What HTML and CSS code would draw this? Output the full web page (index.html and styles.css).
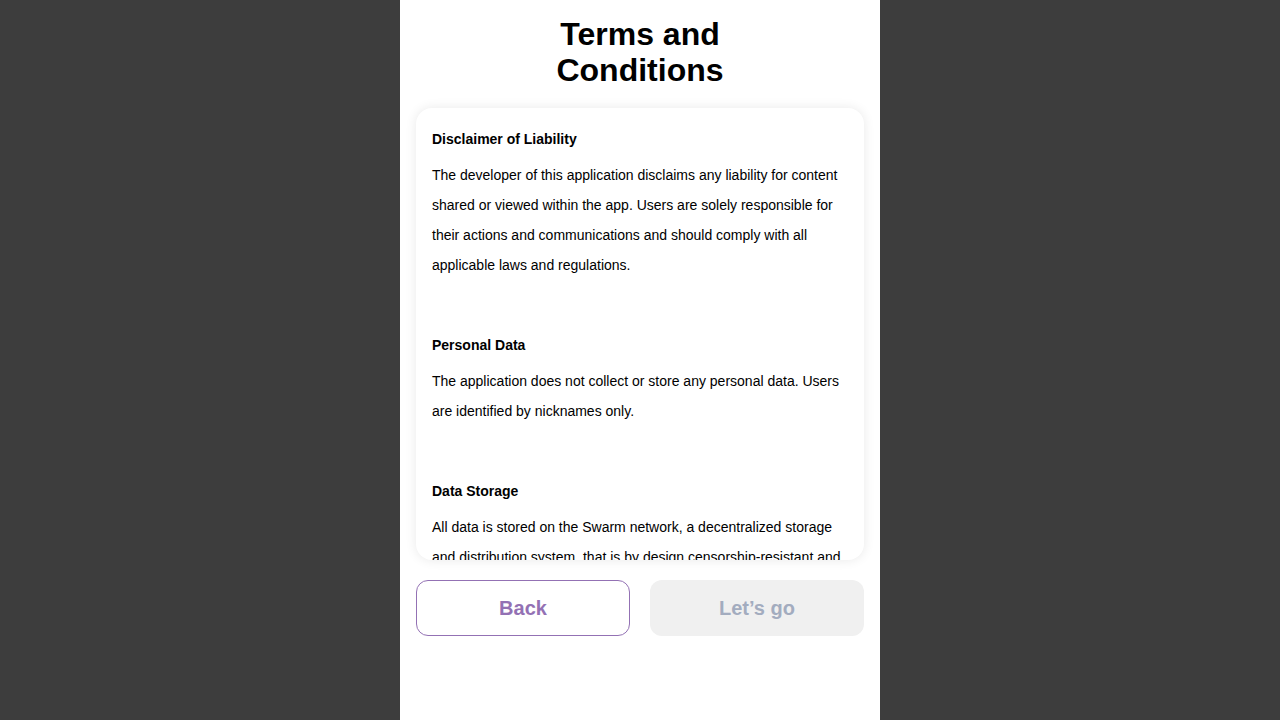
FILE: index.html
```html
<!DOCTYPE html>
<html lang="en">
<head>
<meta charset="utf-8">
<title>Terms and Conditions</title>
<link rel="stylesheet" href="styles.css">
</head>
<body>
<main class="screen">
  <h1 class="title">Terms and<br>Conditions</h1>
  <section class="card">
    <div class="section">
      <h2 class="heading">Disclaimer of Liability</h2>
      <p class="text">The developer of this application disclaims any liability for content shared or viewed within the app. Users are solely responsible for their actions and communications and should comply with all applicable laws and regulations.</p>
    </div>
    <div class="section">
      <h2 class="heading">Personal Data</h2>
      <p class="text">The application does not collect or store any personal data. Users are identified by nicknames only.</p>
    </div>
    <div class="section">
      <h2 class="heading">Data Storage</h2>
      <p class="text">All data is stored on the Swarm network, a decentralized storage and distribution system, that is by design censorship-resistant and cannot be deleted or modified by the developer.</p>
    </div>
  </section>
  <div class="actions">
    <button class="btn btn-back">Back</button>
    <button class="btn btn-go" disabled>Let’s go</button>
  </div>
</main>
</body>
</html>
```
FILE: styles.css
```css
html, body {
  margin: 0;
  padding: 0;
  height: 100%;
}
body {
  background: #3d3d3d;
  font-family: "Liberation Sans", Arial, sans-serif;
  color: #000;
  display: flex;
  justify-content: center;
}
.screen {
  width: 480px;
  height: 720px;
  background: #fff;
  box-sizing: border-box;
  padding: 16px 16px 0;
  display: flex;
  flex-direction: column;
}
.title {
  margin: 0;
  font-size: 32px;
  line-height: 36px;
  font-weight: 700;
  text-align: center;
}
.card {
  margin-top: 20px;
  height: 452px;
  box-sizing: border-box;
  border-radius: 16px;
  background: #fff;
  box-shadow: 0 0 12px rgba(0, 0, 0, 0.09);
  padding: 16px 16px 0;
  overflow: hidden;
}
.section {
  margin-bottom: 50px;
}
.heading {
  margin: 0 0 6px;
  font-size: 14px;
  line-height: 30px;
  font-weight: 700;
}
.text {
  margin: 0;
  font-size: 14px;
  line-height: 30px;
}
.actions {
  margin-top: 20px;
  display: flex;
  gap: 20px;
}
.btn {
  flex: 1 1 0;
  min-width: 0;
  padding: 0;
  height: 56px;
  border-radius: 12px;
  font-family: "Liberation Sans", Arial, sans-serif;
  font-size: 20px;
  font-weight: 700;
  box-sizing: border-box;
  border: 1px solid transparent;
}
.btn-back {
  background: #fff;
  border-color: #9371b4;
  color: #9371b4;
}
.btn-go {
  background: #f0f0f0;
  color: #a3acbf;
}
```
